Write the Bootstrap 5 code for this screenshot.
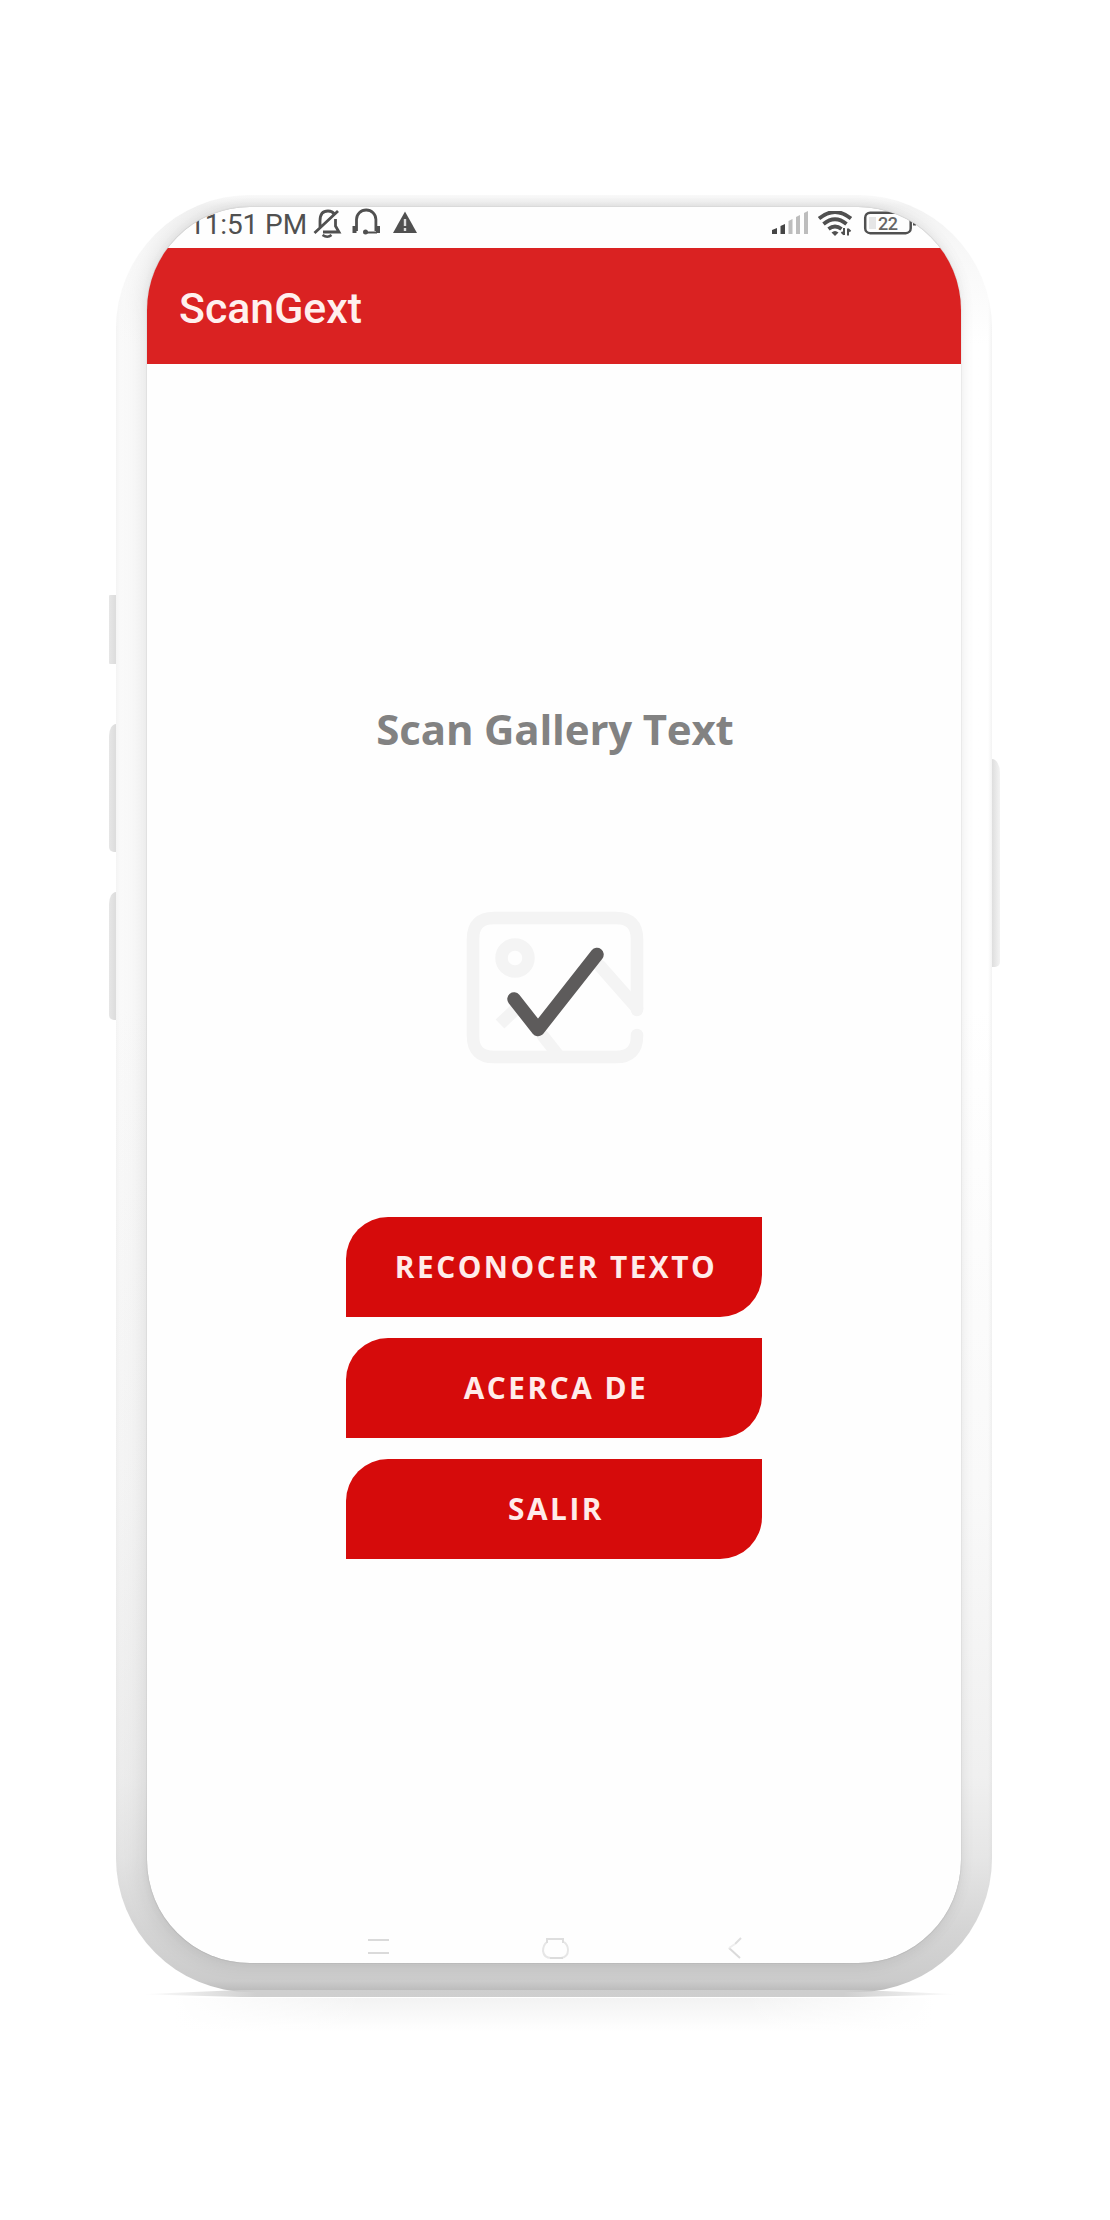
<!DOCTYPE html>
<html lang="es">
<head>
<meta charset="utf-8">
<meta name="viewport" content="width=device-width, initial-scale=1">
<title>ScanGext</title>
<link href="https://cdn.jsdelivr.net/npm/bootstrap@5.3.0/dist/css/bootstrap.min.css" rel="stylesheet">
<style>
body{background:#fff;height:2220px;overflow:hidden;font-family:"Open Sans","Noto Sans",sans-serif}
.stage{width:876px;margin-left:116px;padding-top:195px}
.frame{height:1797px;padding:11.500px 31px 29.500px;border-radius:134px;overflow:hidden;
 background:linear-gradient(180deg,rgba(205,205,205,0) 0,rgba(205,205,205,0) 45%,rgba(205,205,205,.12) 72%,rgba(205,205,205,.3) 88%,rgba(205,205,205,.5) 92.500%,rgba(205,205,205,.85) 96.500%,#cfcfcf 98.300%,#cbcbcb 99.400%,#b9b9b9 100%),
 linear-gradient(180deg,#fbfbfb 0,#f3f3f3 11px,#f7f7f7 50px,rgba(255,255,255,0) 150px),
 linear-gradient(90deg,#f4f4f4 0,#f9f9f9 4px,#fafafa 12px,#fefefe 30px,#fff 872px,#f3f3f3 100%)}
.screen{height:1756px;border-radius:103px;background:#fefefe;box-shadow:0 0 1px rgba(0,0,0,.35),-6px 0 20px rgba(0,0,0,.09),0 -3px 10px rgba(0,0,0,.02),3px 0 16px rgba(0,0,0,.03)}
.phone-top{border-radius:103px 103px 0 0;overflow:hidden;flex:none}
.side-key{width:7px;left:-7px;background:linear-gradient(90deg,#e6e6e6,#dcdcdc);border-radius:5px 0 0 5px}
.key-a{top:400px;height:69px;border-radius:1px 0 0 1px}
.key-b{top:529px;height:128px;border-radius:7px 0 0 5px/12px 0 0 5px}
.key-c{top:697px;height:128px;border-radius:7px 0 0 5px/12px 0 0 5px}
.key-d{left:auto;right:-8px;width:8px;top:564px;height:208px;background:linear-gradient(90deg,#dedede,#f3f3f3);border-radius:0 8px 5px 0/0 14px 5px 0}
.statusbar{height:41.500px;padding:0 40px 0 42px;font:400 28px/36px Roboto,sans-serif;color:#505050}
.clock{letter-spacing:-.1px;width:122px;white-space:nowrap;padding-top:.5px}
.appbar{height:115.500px;background:#da2222;padding:6px 0 0 32px;font:500 42.800px/1 Roboto,sans-serif;color:#fff0ee}
.headline{font-size:42px;line-height:58px;font-weight:700;color:#828282;margin:336px 0 0 2px;letter-spacing:-.18px}
.picture{margin-top:153.500px;height:154px;padding-left:1px}
.actions{margin-top:152px;gap:21px}
.btn-leaf{width:416px;height:100px;border:0;border-radius:42px 0;background:#d60b0b!important;color:#ffecea!important;font-size:29.800px;font-weight:700;letter-spacing:2.5px;padding:0 0 0 4px}
.navkeys{height:32px;margin-top:auto}
.shadow-line{width:816px;height:7px;margin:-2px 0 0 26px;background:linear-gradient(90deg,transparent,#cfcfcf 14%,#cecece 86%,transparent);clip-path:polygon(0 60%,12% 0,88% 0,100% 60%,88% 100%,12% 100%)}
.shadow-soft{width:760px;height:34px;margin:1px 0 0 58px;background:linear-gradient(90deg,#fff,transparent 25%,transparent 75%,#fff),linear-gradient(#f3f3f3,#fff)}
</style>
</head>
<body>
<main class="stage">
 <div class="position-relative">
  <span class="side-key key-a position-absolute"></span>
  <span class="side-key key-b position-absolute"></span>
  <span class="side-key key-c position-absolute"></span>
  <span class="side-key key-d position-absolute"></span>
  <div class="frame">
   <div class="screen d-flex flex-column">
    <div class="phone-top">
     <div class="statusbar d-flex align-items-start">
      <span class="clock">11:51 PM</span>
      <svg width="110" height="36" viewBox="0 0 110 36" fill="none" stroke="#505050" stroke-width="2.800">
       <path d="M3.500 26 27 4M9 20V14c0-7 3-10 8-10 3 0 5 1 6 3M24.500 12v7l3.500 6H12"/><path d="M11.500 28q5 3.500 9 0" stroke-width="2.500"/>
       <path d="M45.500 24V12.500a9.700 9.500 0 0 1 19.400 0V24" stroke-width="2.800"/><path d="M43.500 19v7M67 19v7" stroke-width="4"/><path d="M54 25.500h12" stroke-width="2.200"/><circle cx="54.500" cy="25" r="2.500" fill="#505050" stroke="none"/>
       <path d="M94 4.500 106 26H82Z" fill="#505050" stroke="none"/><path d="M94 12v7M94 21v3" stroke="#ddd" stroke-width="2.400"/>
      </svg>
      <svg class="ms-auto mt-1" width="150" height="32" viewBox="0 3 150 32" fill="none" stroke="#505050">
       <g stroke="none"><path d="M1 26v-4l5-2v6ZM9.500 26v-8l4.500-2v10Z" fill="#454545"/><path d="M17.500 26V13l4-2v15ZM25 26V9l4-2v19ZM33 26V5l4-2v23Z" fill="#bdbdbd"/></g>
       <g stroke-width="3.800"><path d="M48 10.500q16-13 32 0M52.500 16q11.500-9.500 23 0M57.500 21q6.500-5 13 0"/></g><path d="M60.500 24.500q3.500-3 7 0l-3.500 3.500Z" fill="#505050" stroke="none"/><path d="M73 20v7M70.500 24l2.500 2.500M77 27.500v-7M79.500 23.500l-2.500-2.500" stroke-width="2"/>
       <rect x="94.200" y="4.700" width="45.500" height="20.500" rx="5" stroke-width="2.500"/><path d="M98 9h7v12h-7z" fill="#e6e6e6" stroke="none"/>
       <text x="107" y="21.500" fill="#666" stroke="none" font-family="Roboto, sans-serif" font-size="18" font-weight="500" letter-spacing="-.5">22</text><path d="M143.500 12.500v5" stroke-width="3"/>
      </svg>
     </div>
     <header class="appbar d-flex align-items-center">ScanGext</header>
    </div>
    <h1 class="headline text-center">Scan Gallery Text</h1>
    <div class="picture">
     <svg class="d-block mx-auto" width="178" height="154" viewBox="0 0 178 154" fill="none" stroke-linecap="round" stroke-linejoin="round">
      <g stroke="#f4f4f4" stroke-width="12.500">
       <path d="M171 99V28Q171 7 150 7H28Q7 7 7 28V125Q7 146 28 146H150Q171 146 171 125V124"/>
       <path d="M171 97 134 55M77 125 92 144"/><path d="M34 113 52 96" stroke-linecap="butt"/><circle cx="49" cy="47" r="13.500"/>
      </g>
      <path d="M48 88 72 118.500 131 43.500" stroke="#5d5b5b" stroke-width="13.500"/>
     </svg>
    </div>
    <div class="actions d-flex flex-column align-items-center">
     <button class="btn btn-leaf">RECONOCER TEXTO</button>
     <button class="btn btn-leaf">ACERCA DE</button>
     <button class="btn btn-leaf">SALIR</button>
    </div>
    <nav class="navkeys">
     <svg class="d-block" width="814" height="32" viewBox="0 1 814 32" fill="none" stroke="#dadada" stroke-width="2">
      <path d="M221 10h21M221 23h21"/><path d="M400 12q-4 3-4 9 1 7 8 7h10q7-1 7-8 0-5-4-8" stroke="#e6e6e6"/><path d="M400 13V9h16v4" stroke="#dedede"/><path d="M403 28h13" stroke="#dcdcdc"/><path d="M594 8 588 14" stroke="#dedede"/><path d="M582 18 593 28"/><path d="M588 14 582 18" stroke="#eee"/>
     </svg>
    </nav>
   </div>
  </div>
 </div>
 <div class="shadow-line"></div>
 <div class="shadow-soft"></div>
</main>
<script src="https://cdn.jsdelivr.net/npm/bootstrap@5.3.0/dist/js/bootstrap.bundle.min.js"></script>
</body>
</html>
